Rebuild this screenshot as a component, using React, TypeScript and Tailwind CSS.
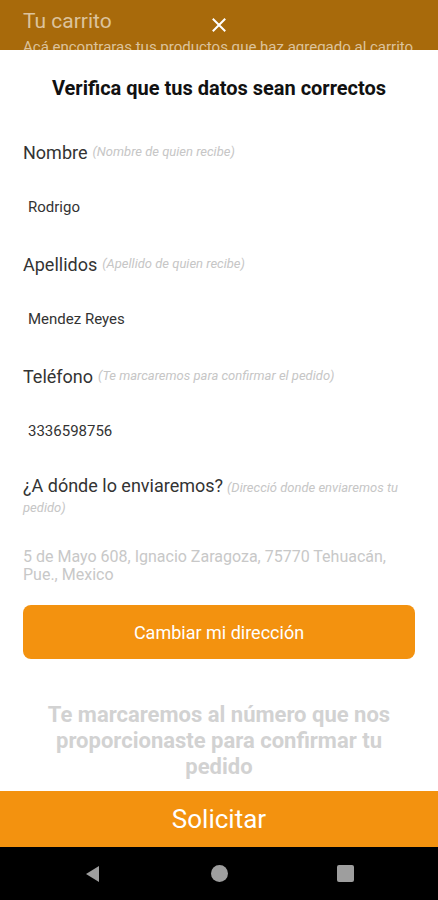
import React from "react";

function Field({ label, hint, value }: { label: string; hint: string; value: string }) {
  return (
    <div className="flex flex-col">
      <div className="h-[24px] flex items-center whitespace-nowrap">
        <span className="text-[18px] text-[#333333]">{label}</span>
        <span className="ml-[5px] text-[13px] italic text-[#c6c6c6]">{hint}</span>
      </div>
      <div className="mt-[33px] h-[20px] flex items-center pl-[5px] text-[15px] text-[#333333]">{value}</div>
    </div>
  );
}

export default function App() {
  return (
    <div
      className="w-[438px] h-[900px] flex flex-col overflow-hidden bg-white"
      style={{ fontFamily: "Roboto, 'Noto Sans', sans-serif" }}
    >
      <div className="relative h-[50px] shrink-0 overflow-hidden bg-[#a86a0b] px-[23px]">
        <div className="pt-[7px] text-[21px] leading-[28px] text-[#dcc39d]">Tu carrito</div>
        <div className="mt-[3px] overflow-hidden whitespace-nowrap text-[15px] leading-[18px] text-[#dcc39d]">
          Acá encontraras tus productos que haz agregado al carrito
        </div>
        <div className="absolute left-[208px] top-[14px] flex h-[22px] w-[22px] items-center justify-center">
          <svg width="14" height="14" viewBox="0 0 14 14">
            <path d="M1.5 1.5 L12.5 12.5 M12.5 1.5 L1.5 12.5" stroke="#ffffff" strokeWidth="2" strokeLinecap="square" />
          </svg>
        </div>
      </div>

      <div className="flex flex-1 flex-col bg-white">
        <div className="pt-[26px] text-center text-[20px] font-bold leading-[24px] text-[#111111]">
          Verifica que tus datos sean correctos
        </div>

        <div className="mt-[40px] flex flex-col gap-[35px] px-[23px]">
          <Field label="Nombre" hint="(Nombre de quien recibe)" value="Rodrigo" />
          <Field label="Apellidos" hint="(Apellido de quien recibe)" value="Mendez Reyes" />
          <Field label="Teléfono" hint="(Te marcaremos para confirmar el pedido)" value="3336598756" />
        </div>

        <div className="mt-[35px] px-[23px]">
          <p className="leading-[19px]">
            <span className="text-[18px] text-[#333333]">¿A dónde lo enviaremos?</span>{" "}
            <span className="text-[13px] italic text-[#c6c6c6]">(Direcció donde enviaremos tu pedido)</span>
          </p>
          <p className="mt-[31px] pr-[20px] text-[16px] leading-[18px] text-[#c8c8c8]">
            5 de Mayo 608, Ignacio Zaragoza, 75770 Tehuacán, Pue., Mexico
          </p>
          <button className="mt-[21px] flex h-[54px] w-full items-center justify-center rounded-[8px] bg-[#f3920f] text-[18px] text-white">
            Cambiar mi dirección
          </button>
        </div>

        <p className="mt-[43px] px-[40px] text-center text-[22px] font-bold leading-[26px] text-[#d2d2d2]">
          Te marcaremos al número que nos proporcionaste para confirmar tu pedido
        </p>
      </div>

      <div className="flex h-[56px] shrink-0 items-center justify-center bg-[#f3920f] text-[26px] text-white">
        Solicitar
      </div>

      <div className="flex h-[53px] shrink-0 items-center bg-black">
        <div className="flex flex-1 justify-center">
          <svg width="17" height="18" viewBox="0 0 17 18" className="ml-[-24px]">
            <path d="M15 1 L15 17 L2 9 Z" fill="#9e9e9e" />
          </svg>
        </div>
        <div className="flex w-[20px] justify-center">
          <div className="h-[17px] w-[17px] rounded-full bg-[#9e9e9e]" />
        </div>
        <div className="flex flex-1 justify-center">
          <div className="ml-[24px] h-[17px] w-[17px] rounded-[2px] bg-[#9e9e9e]" />
        </div>
      </div>
    </div>
  );
}
